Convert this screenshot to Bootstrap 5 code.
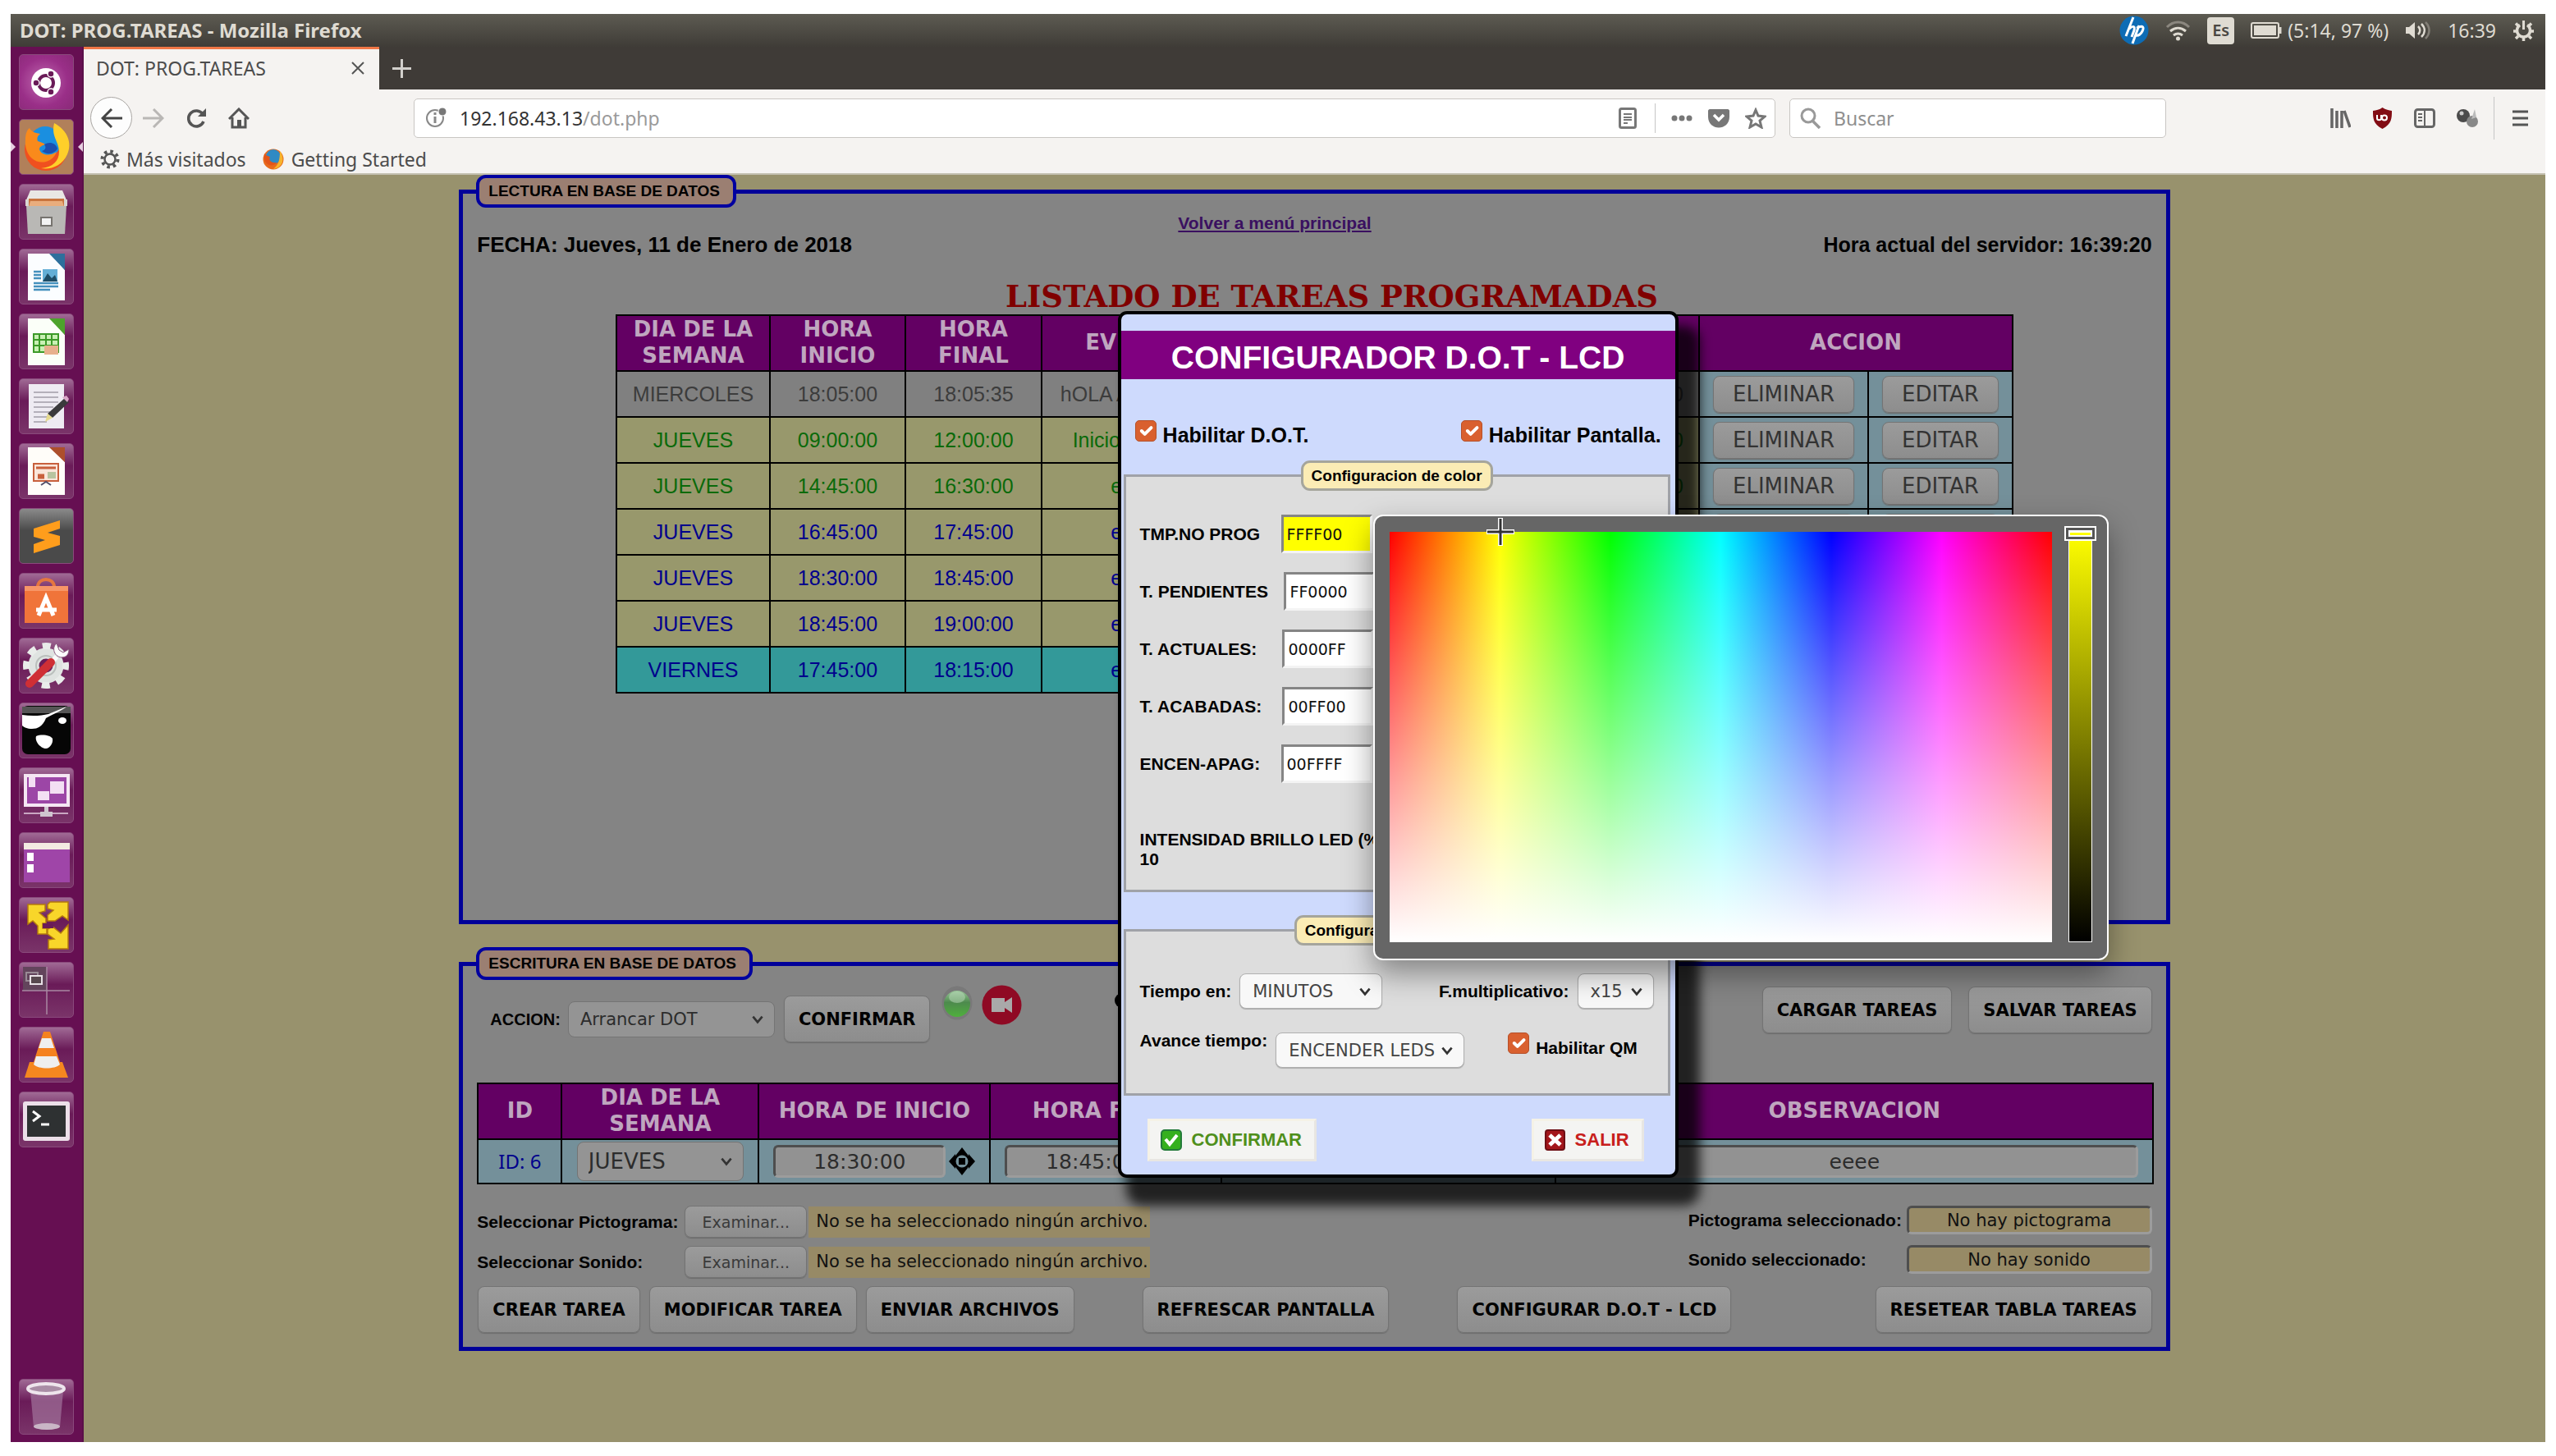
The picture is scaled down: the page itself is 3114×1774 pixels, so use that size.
<!DOCTYPE html>
<html lang="es">
<head>
<meta charset="utf-8">
<meta name="viewport" content="width=device-width, initial-scale=1">
<title>DOT: PROG.TAREAS</title>
<link href="https://cdn.jsdelivr.net/npm/bootstrap@5.3.0/dist/css/bootstrap.min.css" rel="stylesheet">
<style>
:root{--ui:"Noto Sans","Open Sans",sans-serif;--ar:"Liberation Sans",Arial,sans-serif;--dj:"DejaVu Sans",Verdana,sans-serif}
body{background:#fff;padding:17px 13px;font-family:var(--ar);color:#000;line-height:1.2}
.desktop{min-height:calc(100vh - 34px)}
svg{display:block;flex:none}
/* top panel */
.panel-top{height:40px;background:linear-gradient(#5d5b52,#3f3c37);color:#dfdbd2;font:23px/30px var(--ui);padding:0 13px 0 11px}
.panel-top h1{font:700 24px/30px var(--ui);margin:0;color:#dfdbd2}
.kbd-lang{width:33px;height:33px;border-radius:4px;background:#dfdbd2;color:#4a4742;font:600 20px/32px var(--ui);text-align:center}
/* launcher */
.dock{width:89px;background:#660f52;padding:9px 12px 9px 10px;border-right:2px solid #5a1049;gap:11px}
.tile{width:67px;height:68px;border-radius:5px;border:1px solid #8a4a7c;padding:0;background:linear-gradient(#a06a95,#6a1b58 40%,#7a3469);position:relative}
.tile svg{width:65px;height:66px}
.tile-fox{background:#b1805a}
.tile-dark{background:linear-gradient(#8a8a8a,#4a4a4a 40%)}
.tile-swirl{background:radial-gradient(circle at 45% 50%,#c06ab0,#9a2f88 60%,#8a2a78)}
.tile-fox::before,.tile-fox::after{content:"";position:absolute;top:27px;border:6px solid transparent}
.tile-fox::before{left:-11px;border-left-color:#e6cfe0;border-right:0}
.tile-fox::after{right:-12px;border-right-color:#e6cfe0;border-left:0}
/* browser chrome */
.tabstrip{height:52px;background:#3f3b37}
.tab-on{width:360px;background:#f5f3f1;border-top:3px solid #f07746;color:#4c4c4c;font:23px/30px var(--ui);padding:0 18px 3px 15px}
.bar{background:#f5f3f1;color:#4c4c4c}
.navrow{height:69px;padding:0 21px 0 8px}
.bookmarks{height:35px;padding:0 20px 2px;font:23px/30px var(--ui);border-bottom:2px solid #c3c0b0}
.bookmarks a{color:#4c4c4c;text-decoration:none}
.icon-btn{border:0;background:none;padding:0}
.btn-back{width:51px;height:51px;border:1px solid #a9a6a3;border-radius:50%;background:#fdfdfd}
.urlbox,.findbox{height:48px;background:#fff;border:1px solid #c9c6c3;border-radius:5px}
.urlbox{padding:0 10px 0 14px;margin-left:200px}
.findbox{width:459px;margin:0 200px 0 17px;padding:0 12px}
.findbox input{font:23px/30px var(--ui);border:0;outline:0;width:100%;background:none;padding:0}
.findbox input::placeholder{color:#8f8f8f;opacity:1}
.addr{font:23px/30px var(--ui);color:#333}
.addr span{color:#9a9a9a}
.vsep{width:1px;height:36px;background:#c6c6c6}
/* page */
.page{background:#98926d;position:relative}
.frame{width:69.5%;margin:0 auto;border:5px solid #000099;background:#848484;padding:0 17px}
.frame>legend{float:none;width:auto;margin:0 0 0 -1px;font:700 19px/24px var(--ar);border:4px solid #0000a0;border-radius:12px;background:#9b7f72;padding:4px 16px 4px 11px;height:40px}
.frame-read{min-height:913px}
.frame-write{margin-top:28px;padding-bottom:17px}
.headrow{height:61px;padding-top:4px;font:700 26px/32px var(--ar)}
.headrow .today{width:854px}
.headrow a{font:700 21px/30px var(--ar);color:#3a1060}
.clock{font:700 25px/32px var(--ar)}
.listing{font:700 37px/44px "DejaVu Serif",serif;color:#800000;margin:25px 0 0;padding-left:42px}
.sheet{--bs-table-bg:transparent;--bs-table-color:inherit;table-layout:fixed;margin:0;text-align:center;color:#000;font-size:25px}
.sheet tr>th,.sheet tr>td{border:2px solid #000;padding:0;vertical-align:middle;line-height:32px}
.sheet tr>th{background:#630063;color:#bfa6bf;font:700 26px/36px var(--dj);padding-bottom:2px}
.sheet tr>th{line-height:32px}
.sheet-read{width:83.4%;height:462px;margin:0 auto}
.sheet-read tbody td{height:56px}
.r-old{background:#808080;color:#3c3c3c}.r-done{background:#98986c;color:#0a6a0a}.r-next{background:#98986c;color:#00008c}.r-edit{background:#339999;color:#00008c}
.sheet tr>td.act{background:#74909a}
.sheet tr>td.tail{text-align:right;padding-right:18px}
.c187{width:187px}.c165{width:165px}.c166{width:166px}.c224{width:224px}.c577{width:577px}.c206{width:206px}.c176{width:176px}
.sheet-write{height:124px}
.sheet-write tbody tr{background:#74909a}
.c102{width:102px}.c240{width:240px}.c282{width:282px}.c407{width:407px}.c728{width:728px}
.idcell{color:#00008c;font:24px/30px var(--ui)}
/* dimmed controls */
.btn-dim{background:linear-gradient(#9b9b9b,#8d8d8d);border:1px solid #747474;border-radius:8px;color:#000;font:700 21px/24px var(--dj);height:57px;padding:0 17px;box-shadow:0 1px 1px #6c6c6c;white-space:nowrap}
.btn-dim.cellbtn{font:26px/30px var(--dj);height:45px;color:#333;padding:0 23px}
.btn-dim.pick{font:19px/24px var(--dj);height:39px;width:149px;color:#3a3a3a;padding:0}
.sel{background-image:url("data:image/svg+xml,%3csvg xmlns='http://www.w3.org/2000/svg' viewBox='0 0 16 16'%3e%3cpath fill='none' stroke='%23333' stroke-width='2.4' d='m3 5 5 6 5-6'/%3e%3c/svg%3e");background-repeat:no-repeat;background-size:18px 18px;font-family:var(--dj);width:auto;border-radius:8px}
.sel-dim{background-color:#949494;border:1px solid #747474;color:#2c2c2c;background-position:right 11px center}
.sel-acc{width:252px;height:44px;font-size:21px;line-height:24px;padding:0 0 0 14px}
.sel-day{width:203px;height:48px;font-size:26px;line-height:30px;padding:0 0 0 13px}
.inset{background:#929292;border:3px solid;border-color:#4e4e4e #9c9c9c #9c9c9c #4e4e4e;border-radius:6px;height:40px;font:25px/30px var(--dj);text-align:center;color:#2c2c2c;padding:0;min-width:0}
.w-time{width:212px}
.cellpad{padding:0 17px}
.lbl{font:700 21px/24px var(--ar);white-space:pre}
.lbl-acc{font:700 20px/24px var(--ar);margin-right:9px}
.actions{height:125px;padding:0 0 0 16px}
.filerow{height:39px}
.filerow .lbl{width:253px}
.filename{background:#978a66;font:21px/36px var(--dj);height:38px;padding:0 2px 0 9px;margin-left:2px;color:#111}
.picked .lbl{width:266px}
.picked .inset{width:299px;height:35px;background:#978a66;font-size:21px;line-height:24px;color:#111}
/* configuration dialog */
.dialog-cfg{position:absolute;left:42%;top:166px;width:683px;background:#cedafd;border:4px solid #000;border-radius:11px;padding:20px 0 16px;box-shadow:18px 26px 14px 8px rgba(0,0,0,.75)}
.dialog-cfg h2{background:#800080;color:#fff;font:700 39px/53px var(--ar);padding-top:6px;margin:0;text-align:center}
.enable{margin:50px 17px 0;font:700 25px/30px var(--ar)}
.enable label{padding-top:3px}
.tick.form-check-input{width:26px;height:26px;margin:0;border:1px solid #b5502a;border-radius:5px;background-color:#d9602f;background-size:26px 26px}
.box{border:3px solid #a0a2a8;background:#ddd;margin:0 6px 0 3px;padding:0 17px}
.box>legend{float:none;width:auto;margin:0 auto;font:700 19px/24px var(--ar);border:3px solid #a5a59c;border-radius:11px;background:#fbecb5;padding:4px 10px 5px;height:37px}
.box-color{margin-top:16px;padding-bottom:25px}
.box-time{margin-top:28px;padding-bottom:31px}
.swatches{padding-top:29px;gap:23px}
.hex{width:111px;height:47px;border:3px solid;border-color:#858585 #f4f4f4 #f4f4f4 #858585;background:#fff;font:19px/24px var(--dj);padding:0 0 0 4px;margin-left:2px;color:#111}
.hex-yellow{background:#ff0}
.bright{margin:57px 0 0;font:700 21px/24px var(--ar)}
.sel-lit{background-color:#f8f8f8;border:1px solid #b0b0b0;color:#444;height:43px;font-size:21px;line-height:24px;padding:0 0 0 15px;background-position:right 11px center;box-shadow:0 1px 1px #aaa}
.w174{width:174px}.w93{width:93px}.w230{width:230px}
.gap10{gap:10px}
.flush{line-height:20px}
.qm{margin-left:43px}
.qm .lbl{margin-top:9px}
.btn-lit{height:52px;background:#f4f4f2;border:3px solid;border-color:#f5f2e6 #e8e6e2 #e8e6e2 #f5f2e6;border-radius:0;font:700 22px/26px var(--ar);padding:0 15px 0 13px;gap:12px}
.ok-green{color:#4f8f1c}.no-red{color:#c8201c}
/* colour picker */
.picker{position:absolute;left:52.4%;top:414px;background:#666;border:2px solid #fff;border-radius:12px;padding:19px 18px 20px;gap:20px;box-shadow:0 16px 36px rgba(0,0,0,.4)}
.spectrum{width:807px;height:500px;position:relative;background:linear-gradient(transparent,#fff),linear-gradient(90deg,red,#ff0,#0f0,#0ff,#00f,#f0f,red)}
.cross{position:absolute;left:16.66%;top:0;width:34px;height:34px;margin:-17px}
.value{width:29px;height:500px;border:1px solid #fff;position:relative;background:linear-gradient(#ff0,#000)}
.thumb{position:absolute;left:-6px;right:-6px;top:-8px;height:18px;border:2px solid #fff;box-shadow:inset 0 0 0 3px #555,inset 0 0 0 5px #fff}
</style>
</head>
<body>
<div class="desktop d-flex flex-column">

<header class="panel-top d-flex align-items-center">
  <h1 class="me-auto">DOT: PROG.TAREAS - Mozilla Firefox</h1>
  <div class="d-flex align-items-center" style="gap:20px">
    <svg width="36" height="36" viewBox="0 0 36 36"><circle cx="18" cy="18" r="17.500" fill="#0d6cb5"/><path d="M17 2l-9 23M12 16c6-5 7-2 6 2l-3 8M24 12l-8 22M21 15c9-4 9 0 7 4s-5 6-9 5" fill="none" stroke="#fff" stroke-width="3"/></svg>
    <svg width="31" height="26" viewBox="0 0 31 26" fill="none" stroke-width="3"><path d="M2 9c8-8 19-8 27 0" stroke="#8b877f"/><path d="M6 14c6-5 13-5 19 0M10 19c4-3 7-3 11 0" stroke="#dfdbd2"/><circle cx="15.500" cy="23" r="2.500" fill="#dfdbd2"/></svg>
    <span class="kbd-lang">Es</span>
    <div class="d-flex align-items-center" style="gap:7px">
      <svg width="38" height="20" viewBox="0 0 38 20"><rect x="1" y="1" width="33" height="18" rx="2" fill="none" stroke="#dfdbd2" stroke-width="2"/><rect x="4" y="4" width="27" height="12" fill="#dfdbd2"/><path d="M36 6v8" stroke="#dfdbd2" stroke-width="3"/></svg>
      <span>(5:14, 97 %)</span>
    </div>
    <svg width="32" height="26" viewBox="0 0 32 26"><path d="M1 9h4l7-6v20l-7-6H1z" fill="#dfdbd2"/><path d="M16 8c3 3 3 7 0 10M20 5c5 5 5 11 0 16" fill="none" stroke="#dfdbd2" stroke-width="2.500"/><path d="M25 3c6 6 6 14 0 20" fill="none" stroke="#827e76" stroke-width="2.500"/></svg>
    <span>16:39</span>
    <svg width="27" height="27" viewBox="0 0 27 27" fill="none" stroke="#dfdbd2"><path d="M9 6.500a8 8 0 1 0 9 0" stroke-width="3.500"/><path d="M13.500 1v11" stroke-width="3"/><path d="M1 14h4M22 14h4M13.500 22v4M4 4.500l3 3M23 4.500l-3 3M4 23l3-3M23 23l-3-3" stroke-width="3.500"/></svg>
  </div>
</header>

<div class="d-flex flex-grow-1">
<nav class="dock d-flex flex-column" aria-label="Lanzador">
  <button class="tile tile-swirl" aria-label="Buscar en el equipo"><svg viewBox="0 0 65 66"><circle cx="32" cy="34" r="18" fill="#fff"/><circle cx="32" cy="34" r="9" fill="none" stroke="#6a1b58" stroke-width="4"/><g fill="#6a1b58" stroke="#fff" stroke-width="1.500"><circle cx="20" cy="34" r="4"/><circle cx="38" cy="23" r="4"/><circle cx="38" cy="45" r="4"/></g></svg></button>
  <button class="tile tile-fox" aria-label="Firefox"><svg viewBox="0 0 65 66"><circle cx="32" cy="36" r="26" fill="#f0501f"/><circle cx="31" cy="27" r="19" fill="#1a8fe0"/><path d="M42 4c17 9 22 25 16 38-6 14-20 19-32 17 14-1 22-9 22-20 0-13-10-18-6-35z" fill="#ffcf2a"/><path d="M7 24c0-7 2-12 5-14 2 4 6 6 13 7-4 3-4 6-3 9 3 1 7 2 9 4-5 2-7 3-7 6 2 7 12 9 21 3-4 12-20 17-30 8-6-5-9-15-8-23z" fill="#f98a1b"/><path d="M30 30c6-4 14-2 16 5-4 7-13 8-19 3 4-1 6-4 3-8z" fill="#1c4fb0"/></svg></button>
  <button class="tile" aria-label="Archivos"><svg viewBox="0 0 65 66"><path d="M13 7h39l6 14H7z" fill="#e9e7e4"/><path d="M7 18h51v8H7z" fill="#d9d6d2"/><path d="M11 17h43v10H11z" fill="#c9743e"/><path d="M13 20h39l2 7H11z" fill="#e9ad7d"/><path d="M8 26h49l-2 34H10z" fill="#b9b8b5"/><rect x="26" y="40" width="13" height="10" fill="#f3f3f3" stroke="#77746f" stroke-width="2"/></svg></button>
  <button class="tile" aria-label="Writer"><svg viewBox="0 0 65 66"><path d="M10 5h28l17 20v37H10z" fill="#fbfdff"/><path d="M36 5h19v20z" fill="#2d6f9c"/><path d="M17 27h9M17 31h9M17 35h9M17 41h30M17 45h30M17 49h20" stroke="#4490bd" stroke-width="2.500"/><path d="M28 24h18v15H28z" fill="#64afd6"/><path d="M28 39l6-10 5 6 4-4 3 8z" fill="#1e4d66"/></svg></button>
  <button class="tile" aria-label="Calc"><svg viewBox="0 0 65 66"><path d="M10 5h28l17 20v37H10z" fill="#fbfff8"/><path d="M36 5h19v20z" fill="#4da32c"/><path d="M17 24h30v22H17z" fill="#c9f0b4" stroke="#3c9a28" stroke-width="2"/><path d="M17 31h30M17 38h30M24 24v22M32 24v22M39 24v22" stroke="#3c9a28" stroke-width="2"/><path d="M30 38h17v11H30z" fill="#e7b08d"/></svg></button>
  <button class="tile" aria-label="Editor de textos"><svg viewBox="0 0 65 66"><path d="M11 6h43v54H11z" fill="#eeebf2"/><path d="M17 16h30M17 22h30M17 28h30M17 34h24M17 40h20M17 46h18M17 52h16" stroke="#b4b0ba" stroke-width="2"/><path d="M56 22l4 6-20 19-6-5z" fill="#3a3a3c"/><path d="M34 42l6 5-9 5z" fill="#e5d98d"/><path d="M52 22l5-2 3 4-2 4z" fill="#d9a7c8"/></svg></button>
  <button class="tile" aria-label="Impress"><svg viewBox="0 0 65 66"><path d="M10 4h28l17 18v40H10z" fill="#fffdf9"/><path d="M36 4h19v18z" fill="#ad4f2c"/><path d="M17 24h30v21H17z" fill="#fae6da" stroke="#c8603c" stroke-width="2"/><path d="M20 29h24M22 38h8M22 41h8" stroke="#c8603c" stroke-width="3"/><path d="M34 34h10v8H34z" fill="#b8c4a0"/><path d="M26 50l6-4 6 4" fill="none" stroke="#54506a" stroke-width="2"/></svg></button>
  <button class="tile tile-dark" aria-label="Sublime Text"><svg viewBox="0 0 65 66"><path d="M17 24l32-10v10L34 29l15 4v11L17 54V43l14-5-14-4z" fill="#ff9d1c"/></svg></button>
  <button class="tile" aria-label="Software"><svg viewBox="0 0 65 66"><path d="M22 16c0-12 20-12 20 0" fill="none" stroke="#e5763f" stroke-width="4"/><path d="M6 15h53v45H6z" fill="#f0743a"/><path d="M6 15h53v6H6z" fill="#f79667"/><path d="M23 51l9-22 9 22M20 44h25" fill="none" stroke="#fff" stroke-width="5"/></svg></button>
  <button class="tile" aria-label="Configuración"><svg viewBox="0 0 65 66"><circle cx="32" cy="33" r="15" fill="none" stroke="#dfe3e1" stroke-width="13"/><circle cx="32" cy="33" r="24" fill="none" stroke="#e9ecea" stroke-width="8" stroke-dasharray="10 8.850" stroke-dashoffset="5"/><circle cx="32" cy="33" r="12" fill="none" stroke="#b9bfbc" stroke-width="2"/><path d="M37 31l8-9" stroke="#fafafa" stroke-width="6"/><path d="M12 55l26-26" stroke="#cf2f35" stroke-width="10" stroke-linecap="round"/><path d="M45 6c-6 4-4 16 6 17 6 0 9-4 9-10l-7 4-5-3z" fill="#fafafa" stroke="#8b5a80"/></svg></button>
  <button class="tile" aria-label="Juego"><svg viewBox="0 0 65 66"><rect x="3" y="3" width="59" height="59" rx="7" fill="#060606"/><path d="M3 4h59v8H3z" fill="#555"/><path d="M3 14c12 2 24 1 32-1L57 4c-4 4-14 8-25 14-4 10-10 13-17 13-6 0-10-2-12-4z" fill="#fff"/><ellipse cx="52" cy="21" rx="5" ry="4" fill="#fff"/><path d="M20 40c7-3 18-1 20 3 1 6-4 12-8 12-6 0-14-8-12-15z" fill="#fff"/></svg></button>
  <button class="tile" aria-label="Pantallas"><svg viewBox="0 0 65 66"><path d="M5 7h56v40H5z" fill="#f5e6f3"/><path d="M9 11h48v32H9z" fill="#9c46a6"/><path d="M11 11h8v12h-8zM37 16h17v15H37zM22 28h14v11H22z" fill="#f3dff3"/><path d="M5 55h54" stroke="#c9a7c2" stroke-width="2"/><path d="M30 47h5v6h5v6H25v-6h5z" fill="#cfc6cf"/></svg></button>
  <button class="tile" aria-label="Ventanas"><svg viewBox="0 0 65 66"><path d="M5 12h56v48H5z" fill="#9f45a8"/><path d="M5 12h56v8H5z" fill="#f3ebe2"/><path d="M9 24h8v10H9zM9 38h8v10H9z" fill="#fff"/></svg></button>
  <button class="tile" aria-label="VMware"><svg viewBox="0 0 65 66"><path d="M10 8h21v8l-7 2 8 7v6h-4v6h5v7H22V34l-6-6-6 4zM34 8l3-3h22v22l-7-5-9 6h-9v-7l7-6-7-2zM34 38l6-3 10 8 9-10v29H35V51l7-1-8-6z" fill="#f8d62a" stroke="#b47a0c" stroke-width="1.500"/><path d="M28 31h13v6H28z" fill="#6a1b58"/></svg></button>
  <button class="tile" aria-label="Áreas de trabajo"><svg viewBox="0 0 65 66"><path d="M4 5h29v29H4z" fill="#63445c"/><path d="M33 5v58M3 34h58" stroke="#a988a2" stroke-width="1.500"/><path d="M8 12h14v10H8z" fill="none" stroke="#998a95" stroke-width="2"/><path d="M13 16h14v10H13z" fill="#58484f" stroke="#e8e0e6" stroke-width="2"/></svg></button>
  <button class="tile" aria-label="VLC"><svg viewBox="0 0 65 66"><path d="M12 42h40l7 19H6z" fill="#f5871f"/><path d="M29 5h8l13 40c-8 6-28 6-34 0z" fill="#f58220"/><path d="M27 13h11l4 12H23zM20 35h25l4 10c-6 6-26 6-32 0z" fill="#efefef"/></svg></button>
  <button class="tile" aria-label="Terminal"><svg viewBox="0 0 65 66"><rect x="4" y="11" width="57" height="48" rx="3" fill="#ecdfe9"/><path d="M9 16h47v38H9z" fill="#2e3132"/><path d="M16 23l8 6-8 6M26 39h10" fill="none" stroke="#fff" stroke-width="3"/></svg></button>
  <button class="tile mt-auto" aria-label="Papelera"><svg viewBox="0 0 65 66"><path d="M13 14h40l-4 44c-6 4-26 4-32 0z" fill="#a1739b" opacity=".7"/><ellipse cx="32" cy="11" rx="22" ry="6" fill="#a98da5" stroke="#eee5ec" stroke-width="4"/><ellipse cx="33" cy="57" rx="16" ry="4" fill="#c9b6c6"/></svg></button>
</nav>

<div class="flex-grow-1 d-flex flex-column">
  <div class="tabstrip d-flex">
    <div class="tab-on d-flex align-items-center justify-content-between"><span>DOT: PROG.TAREAS</span>
      <button class="icon-btn" aria-label="Cerrar"><svg width="16" height="16" viewBox="0 0 16 16" stroke="#555" stroke-width="2"><path d="M1 1l14 14M15 1L1 15"/></svg></button></div>
    <button class="icon-btn ms-3" aria-label="Nueva pestaña"><svg width="23" height="23" viewBox="0 0 23 23" stroke="#d2d0cc" stroke-width="3"><path d="M11.500 0v23M0 11.500h23"/></svg></button>
  </div>
  <div class="bar">
    <div class="navrow d-flex align-items-center">
      <button class="icon-btn btn-back d-flex align-items-center justify-content-center" aria-label="Atrás"><svg width="26" height="24" viewBox="0 0 26 24" fill="none" stroke="#444" stroke-width="3"><path d="M26 12H2M13 1L2 12l11 11"/></svg></button>
      <svg style="margin:0 27px 0 13px" width="26" height="24" viewBox="0 0 26 24" fill="none" stroke="#b9b7b5" stroke-width="3"><path d="M0 12h24M13 1l11 11-11 11"/></svg>
      <svg style="margin-right:26px" width="25" height="26" viewBox="0 0 25 26" fill="none" stroke="#555" stroke-width="3.500"><path d="M20 8a9.500 9.500 0 1 0 1 9"/><path d="M24 1v10H14z" fill="#555" stroke="none"/></svg>
      <svg width="26" height="26" viewBox="0 0 26 26"><path d="M1 14L13 2l12 12M5 12v12h16V12" fill="none" stroke="#555" stroke-width="3"/><path d="M11 15h5v10h-5z" fill="#555"/></svg>
      <div class="urlbox d-flex align-items-center flex-grow-1">
        <svg width="25" height="25" viewBox="0 0 25 25"><circle cx="11" cy="13" r="10" fill="none" stroke="#888" stroke-width="2"/><path d="M11 11v8M11 6v3" stroke="#888" stroke-width="3"/><circle cx="20" cy="5" r="5" fill="#777" stroke="#fff"/></svg>
        <span class="addr ms-3 me-auto">192.168.43.13<span>/dot.php</span></span>
        <svg width="22" height="26" viewBox="0 0 22 26" fill="none" stroke="#777"><rect x="1.500" y="1.500" width="19" height="23" rx="2" stroke-width="3"/><path d="M6 8h10M6 12h10M6 15h10M6 19h5" stroke-width="2"/></svg>
        <span class="vsep" style="margin:0 19px 0 22px"></span>
        <svg width="26" height="8" viewBox="0 0 26 8" fill="#777"><circle cx="4" cy="4" r="3.500"/><circle cx="13" cy="4" r="3.500"/><circle cx="22" cy="4" r="3.500"/></svg>
        <svg style="margin:0 19px" width="26" height="24" viewBox="0 0 26 24"><path d="M2 1h22c1 0 2 1 2 2v7c0 18-26 18-26 0V3c0-1 1-2 2-2z" fill="#777"/><path d="M7 8l6 6 6-6" fill="none" stroke="#fff" stroke-width="3.500"/></svg>
        <svg width="26" height="26" viewBox="0 0 26 26"><path d="M13 3l3 7 8 1-6 5 2 8-7-4-7 4 2-8-6-5 8-1z" fill="none" stroke="#777" stroke-width="3"/></svg>
      </div>
      <div class="findbox d-flex align-items-center">
        <svg width="25" height="26" viewBox="0 0 25 26" fill="none" stroke="#999"><circle cx="10" cy="10" r="8" stroke-width="3"/><path d="M15 16l9 9" stroke-width="3.500"/></svg>
        <input class="ms-3" type="text" placeholder="Buscar" aria-label="Buscar">
      </div>
      <svg width="25" height="24" viewBox="0 0 25 24" stroke="#666" stroke-width="3.500"><path d="M2 0v24M8 3v21M14 3v21M17 3l7 20"/></svg>
      <svg style="margin:0 27px" width="23" height="26" viewBox="0 0 23 26"><path d="M11.500 0c4 3 8 3 11.500 4 0 9 0 16-11.500 22C0 20 0 13 0 4c4-1 8-1 11.500-4z" fill="#820c14"/><path d="M5 9v4c0 3 5 3 5 0V9M17 12.500a3 3 0 1 1-6 0 3 3 0 1 1 6 0" fill="none" stroke="#fff" stroke-width="2"/></svg>
      <svg width="26" height="24" viewBox="0 0 26 24" fill="none" stroke="#666"><rect x="1.500" y="1.500" width="23" height="21" rx="3" stroke-width="3"/><path d="M13 2v20M5 7h5M5 11h5M5 15h5" stroke-width="2"/></svg>
      <svg style="margin:0 19px 0 26px" width="26" height="24" viewBox="0 0 26 24"><circle cx="8" cy="9" r="8" fill="#4b4b4b"/><circle cx="6" cy="6" r="2.500" fill="#ccc"/><circle cx="19" cy="16" r="7" fill="#888"/><path d="M22 1l2 10-6 2z" fill="#bbb"/></svg>
      <span class="vsep" style="height:52px"></span>
      <svg style="margin-left:22px" width="19" height="20" viewBox="0 0 19 20" stroke="#555" stroke-width="3"><path d="M0 2h19M0 10h19M0 18h19"/></svg>
    </div>
    <div class="bookmarks d-flex align-items-center">
      <svg width="24" height="24" viewBox="0 0 24 24" fill="none" stroke="#555"><circle cx="12" cy="12" r="6.500" stroke-width="2.500"/><circle cx="12" cy="12" r="9.500" stroke-width="4" stroke-dasharray="3.500 3.960"/></svg>
      <a class="ms-2" href="#">Más visitados</a>
      <svg style="margin-left:19px" width="28" height="28" viewBox="0 0 28 28"><circle cx="14" cy="14" r="12.500" fill="#e86a1c"/><circle cx="14" cy="11" r="9" fill="#2f8ac4"/><path d="M22 4c6 8 5 20-8 22 6-5 8-10 8-22z" fill="#f7b42c"/><path d="M3 7c2 3 5 3 7 4-2 4 1 8 8 7-4 6-17 5-15-11z" fill="#e2551a"/></svg>
      <a class="ms-2" href="#">Getting Started</a>
    </div>
  </div>

  <main class="page flex-grow-1">
    <fieldset class="frame frame-read">
      <legend>LECTURA EN BASE DE DATOS</legend>
      <div class="headrow d-flex align-items-end">
        <span class="today">FECHA: Jueves, 11 de Enero de 2018</span>
        <a class="align-self-start" href="#">Volver a menú principal</a>
        <span class="clock ms-auto">Hora actual del servidor: 16:39:20</span>
      </div>
      <h2 class="listing text-center">LISTADO DE TAREAS PROGRAMADAS</h2>
      <table class="table sheet sheet-read">
        <colgroup><col class="c187"><col class="c165"><col class="c166"><col class="c224"><col class="c577"><col class="c206"><col class="c176"></colgroup>
        <thead><tr><th>DIA DE LA SEMANA</th><th>HORA<br>INICIO</th><th>HORA<br>FINAL</th><th>EVENTO</th><th></th><th colspan="2">ACCION</th></tr></thead>
        <tbody>
          <tr class="r-old"><td>MIERCOLES</td><td>18:05:00</td><td>18:05:35</td><td>hOLA A TODOS</td><td class="tail">0</td><td class="act"><button class="btn-dim cellbtn">ELIMINAR</button></td><td class="act"><button class="btn-dim cellbtn">EDITAR</button></td></tr>
          <tr class="r-done"><td>JUEVES</td><td>09:00:00</td><td>12:00:00</td><td>Inicio jornada</td><td class="tail">0</td><td class="act"><button class="btn-dim cellbtn">ELIMINAR</button></td><td class="act"><button class="btn-dim cellbtn">EDITAR</button></td></tr>
          <tr class="r-done"><td>JUEVES</td><td>14:45:00</td><td>16:30:00</td><td>eeee</td><td class="tail">0</td><td class="act"><button class="btn-dim cellbtn">ELIMINAR</button></td><td class="act"><button class="btn-dim cellbtn">EDITAR</button></td></tr>
          <tr class="r-next"><td>JUEVES</td><td>16:45:00</td><td>17:45:00</td><td>eeee</td><td></td><td class="act"><button class="btn-dim cellbtn">ELIMINAR</button></td><td class="act"><button class="btn-dim cellbtn">EDITAR</button></td></tr>
          <tr class="r-next"><td>JUEVES</td><td>18:30:00</td><td>18:45:00</td><td>eeee</td><td></td><td class="act"></td><td class="act"></td></tr>
          <tr class="r-next"><td>JUEVES</td><td>18:45:00</td><td>19:00:00</td><td>eeee</td><td></td><td class="act"></td><td class="act"></td></tr>
          <tr class="r-edit"><td>VIERNES</td><td>17:45:00</td><td>18:15:00</td><td>eeee</td><td></td><td class="act"></td><td class="act"></td></tr>
        </tbody>
      </table>
    </fieldset>

    <fieldset class="frame frame-write">
      <legend>ESCRITURA EN BASE DE DATOS</legend>
      <div class="actions d-flex align-items-start">
        <div class="d-flex align-items-center" style="padding-top:19px">
          <label class="lbl-acc" for="acc">ACCION:</label>
          <select id="acc" class="form-select sel sel-dim sel-acc"><option>Arrancar DOT</option></select>
          <button class="btn-dim" style="margin-left:11px">CONFIRMAR</button>
        </div>
        <svg style="margin:7px 11px 0 14px" width="38" height="44" viewBox="0 0 38 44"><defs><linearGradient id="g" x2="0" y2="1"><stop offset="0" stop-color="#9ac79a"/><stop offset=".45" stop-color="#4d8a4d"/><stop offset="1" stop-color="#4fb03c"/></linearGradient></defs><ellipse cx="19" cy="21" rx="18.500" ry="20.500" fill="#797979"/><circle cx="19" cy="22" r="16" fill="url(#g)"/><ellipse cx="19" cy="14" rx="10" ry="7" fill="#b7d6b7" opacity=".55"/></svg>
        <svg style="margin-top:6px" width="49" height="49" viewBox="0 0 49 49"><circle cx="24.500" cy="24.500" r="24" fill="#8f0a24"/><path d="M12 16h16v5l9-6v19l-9-6v5H12z" fill="#a9a9a9"/></svg>
        <svg style="margin:16px 0 0 112px" width="20" height="18" viewBox="0 0 20 18"><circle cx="10" cy="9" r="9"/></svg>
        <div class="d-flex ms-auto" style="gap:20px;padding-top:8px">
          <button class="btn-dim">CARGAR TAREAS</button>
          <button class="btn-dim">SALVAR TAREAS</button>
        </div>
      </div>
      <table class="table sheet sheet-write">
        <colgroup><col class="c102"><col class="c240"><col class="c282"><col class="c282"><col class="c407"><col class="c728"></colgroup>
        <thead><tr><th>ID</th><th>DIA DE LA<br>SEMANA</th><th>HORA DE INICIO</th><th>HORA FINAL</th><th>EVENTO</th><th>OBSERVACION</th></tr></thead>
        <tbody><tr>
          <td><span class="idcell">ID: 6</span></td>
          <td><select class="form-select sel sel-dim sel-day mx-auto" aria-label="Día de la semana"><option>JUEVES</option></select></td>
          <td><div class="cellpad d-flex align-items-center"><input class="inset w-time me-1" value="18:30:00" aria-label="Hora de inicio"><svg width="32" height="34" viewBox="0 0 32 34"><path d="M16 0l7 9H9zM16 34l7-9H9zM0 17l8-9v18zM32 17l-8-9v18z" fill="#000"/><circle cx="16" cy="17" r="9" fill="#74909a" stroke="#000" stroke-width="3"/><rect x="12" y="13" width="8" height="8"/></svg></div></td>
          <td><div class="cellpad d-flex"><input class="inset w-time" value="18:45:00" aria-label="Hora final"></div></td>
          <td><div class="cellpad d-flex"><input class="inset w-100" value="" aria-label="Evento"></div></td>
          <td><div class="cellpad d-flex"><input class="inset w-100" value="eeee" aria-label="Observación"></div></td>
        </tr></tbody>
      </table>
      <div class="d-flex justify-content-between" style="padding-top:26px">
        <div class="d-flex flex-column" style="gap:10px">
          <div class="filerow d-flex align-items-center"><span class="lbl">Seleccionar Pictograma:</span><button class="btn-dim pick">Examinar...</button><span class="filename">No se ha seleccionado ningún archivo.</span></div>
          <div class="filerow d-flex align-items-center"><span class="lbl">Seleccionar Sonido:</span><button class="btn-dim pick">Examinar...</button><span class="filename">No se ha seleccionado ningún archivo.</span></div>
        </div>
        <div class="picked d-flex flex-column" style="gap:13px">
          <div class="d-flex align-items-center"><label class="lbl" for="pic">Pictograma seleccionado:</label><input id="pic" class="inset" value="No hay pictograma"></div>
          <div class="d-flex align-items-center"><label class="lbl" for="snd">Sonido seleccionado:</label><input id="snd" class="inset" value="No hay sonido"></div>
        </div>
      </div>
      <div class="d-flex" style="padding:10px 0 0 1px;gap:11px">
        <button class="btn-dim">CREAR TAREA</button>
        <button class="btn-dim">MODIFICAR TAREA</button>
        <button class="btn-dim">ENVIAR ARCHIVOS</button>
        <button class="btn-dim" style="margin:0 72px">REFRESCAR PANTALLA</button>
        <button class="btn-dim">CONFIGURAR D.O.T - LCD</button>
        <button class="btn-dim ms-auto">RESETEAR TABLA TAREAS</button>
      </div>
    </fieldset>

    <section class="dialog-cfg" role="dialog" aria-labelledby="cfg">
      <h2 id="cfg">CONFIGURADOR D.O.T - LCD</h2>
      <div class="enable d-flex justify-content-between">
        <div class="d-flex align-items-start gap-2"><input id="edot" class="form-check-input tick" type="checkbox" checked><label for="edot">Habilitar D.O.T.</label></div>
        <div class="d-flex align-items-start gap-2"><input id="elcd" class="form-check-input tick" type="checkbox" checked><label for="elcd">Habilitar Pantalla.</label></div>
      </div>
      <fieldset class="box box-color">
        <legend>Configuracion de color</legend>
        <div class="swatches d-flex flex-column">
          <div class="d-flex align-items-center"><label class="lbl" for="c1">TMP.NO PROG&nbsp;&nbsp;&nbsp;&nbsp;</label><input id="c1" class="hex hex-yellow" value="FFFF00"></div>
          <div class="d-flex align-items-center"><label class="lbl" for="c2">T. PENDIENTES&nbsp;&nbsp;&nbsp;</label><input id="c2" class="hex" value="FF0000"></div>
          <div class="d-flex align-items-center"><label class="lbl" for="c3">T. ACTUALES:&nbsp;&nbsp;&nbsp;&nbsp;&nbsp;</label><input id="c3" class="hex" value="0000FF"></div>
          <div class="d-flex align-items-center"><label class="lbl" for="c4">T. ACABADAS:&nbsp;&nbsp;&nbsp;&nbsp;</label><input id="c4" class="hex" value="00FF00"></div>
          <div class="d-flex align-items-center"><label class="lbl" for="c5">ENCEN-APAG:&nbsp;&nbsp;&nbsp;&nbsp;</label><input id="c5" class="hex" value="00FFFF"></div>
        </div>
        <p class="bright">INTENSIDAD BRILLO LED (%):<br>10</p>
      </fieldset>
      <fieldset class="box box-time">
        <legend>Configuracion de tiempo</legend>
        <div class="d-flex align-items-center gap10" style="padding-top:34px">
          <label class="lbl" for="tu">Tiempo en:</label>
          <select id="tu" class="form-select sel sel-lit w174"><option>MINUTOS</option></select>
          <label class="lbl ms-auto" for="fm">F.multiplicativo:</label>
          <select id="fm" class="form-select sel sel-lit w93"><option>x15</option></select>
        </div>
        <div class="d-flex align-items-start gap10" style="padding-top:29px">
          <label class="lbl flush" for="av">Avance tiempo:</label>
          <select id="av" class="form-select sel sel-lit w230"><option>ENCENDER LEDS</option></select>
          <div class="qm d-flex align-items-start gap-2"><input id="qm" class="form-check-input tick" type="checkbox" checked><label class="lbl flush" for="qm">Habilitar QM</label></div>
        </div>
      </fieldset>
      <div class="d-flex justify-content-between" style="padding:28px 38px 0 32px">
        <button class="btn-lit ok-green d-flex align-items-center"><svg width="26" height="26" viewBox="0 0 26 26"><rect x="1" y="1" width="24" height="24" rx="4" fill="#35b01e" stroke="#237a3a" stroke-width="2"/><path d="M6 12l5 6 9-11" fill="none" stroke="#fff" stroke-width="4"/></svg>CONFIRMAR</button>
        <button class="btn-lit no-red d-flex align-items-center"><svg width="25" height="26" viewBox="0 0 25 26"><rect x="1" y="1" width="23" height="24" rx="3" fill="#a3161b" stroke="#6d0f14" stroke-width="2"/><path d="M6 7l13 12M19 7L6 19" stroke="#fff" stroke-width="5"/></svg>SALIR</button>
      </div>
    </section>

    <div class="picker d-flex">
      <div class="spectrum"><svg class="cross" viewBox="0 0 34 34"><path d="M17 0v34M0 17h34" stroke="#fff" stroke-width="6"/><path d="M17 1v32M1 17h32" stroke="#333" stroke-width="3"/></svg></div>
      <div class="value" role="slider" aria-label="Valor" aria-valuenow="100"><span class="thumb"></span></div>
    </div>
  </main>
</div>
</div>
</div>
<script src="https://cdn.jsdelivr.net/npm/bootstrap@5.3.0/dist/js/bootstrap.bundle.min.js"></script>
</body>
</html>
